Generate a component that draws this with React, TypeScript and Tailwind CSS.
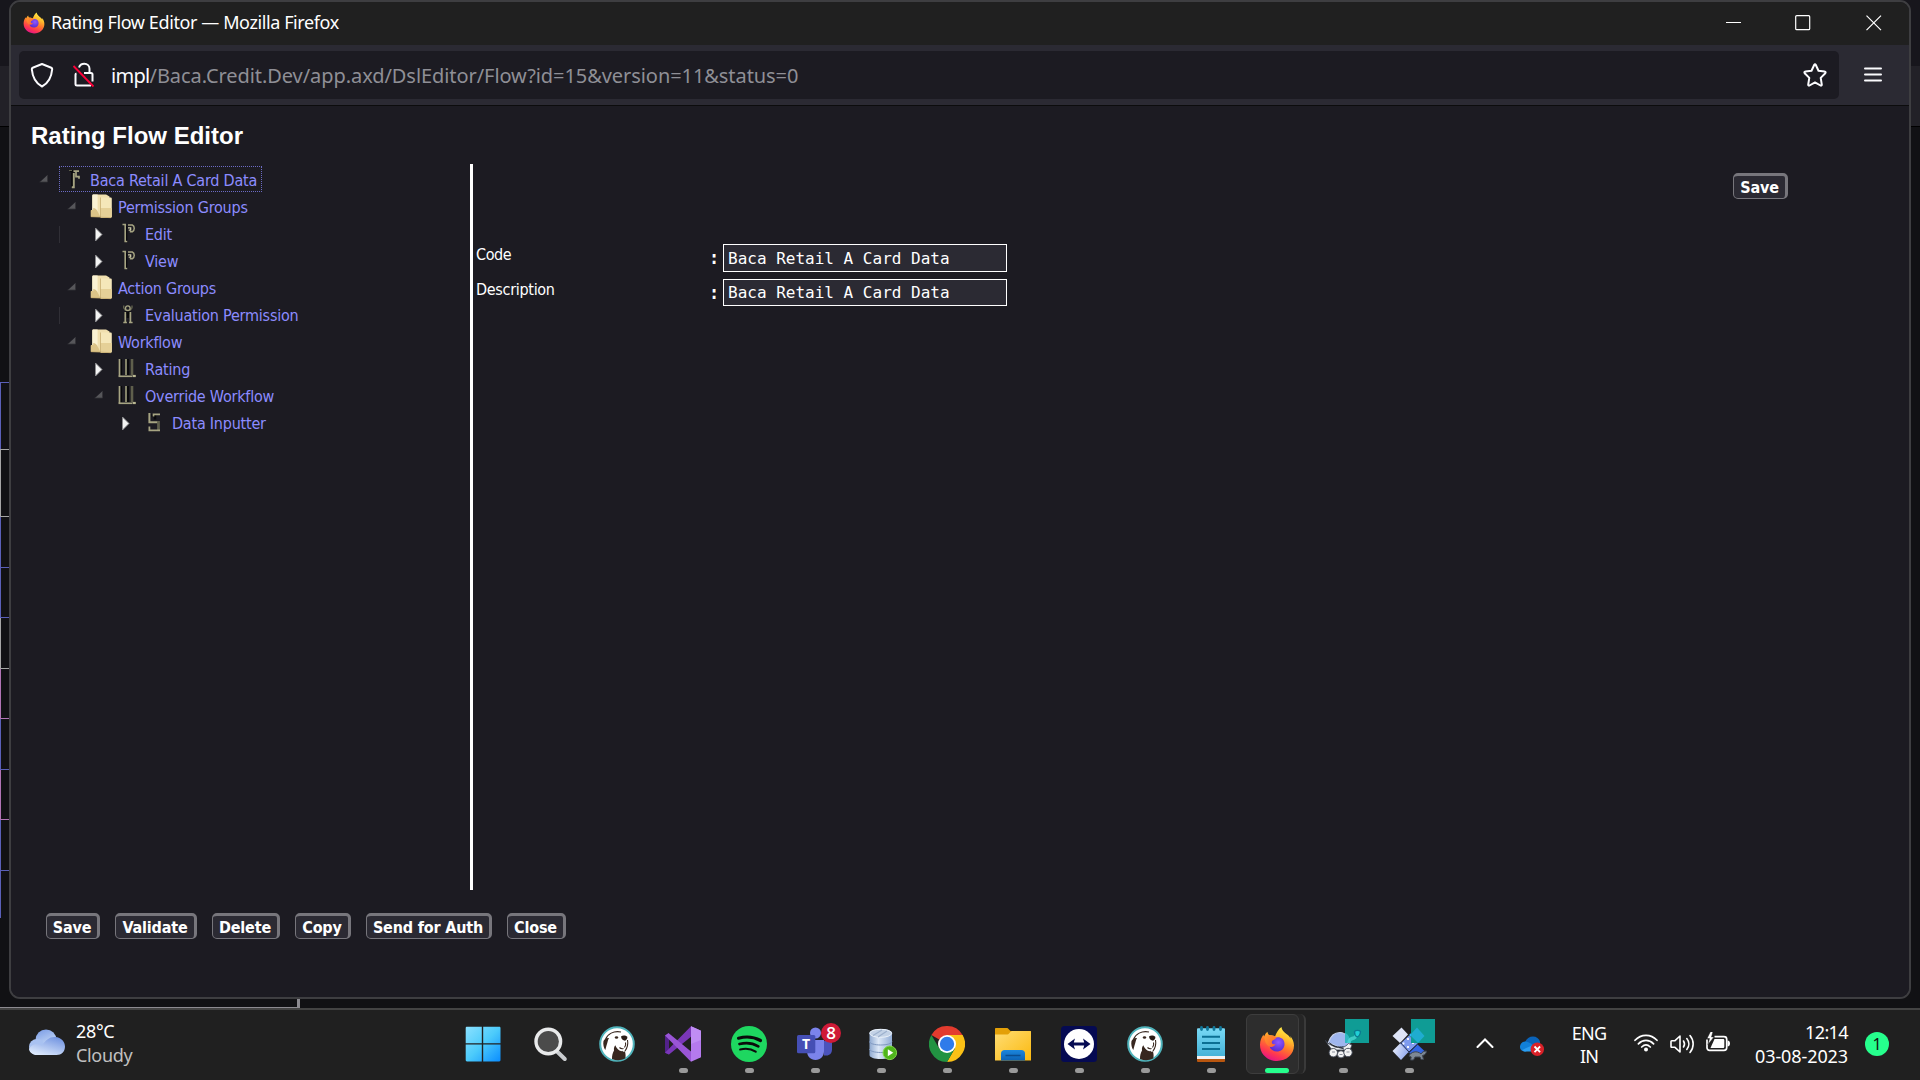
import React from "react";

type IconProps = { className?: string };

/* ---------- Firefox chrome icons ---------- */

function FirefoxLogo({ className }: IconProps) {
  const id = React.useId();
  return (
    <svg viewBox="0 0 36 36" className={className}>
      <defs>
        <linearGradient id={id + "a"} x1="0.8" y1="0" x2="0.35" y2="1">
          <stop offset="0" stopColor="#fff44f" />
          <stop offset="0.3" stopColor="#ffc12e" />
          <stop offset="0.55" stopColor="#ff7a2a" />
          <stop offset="0.8" stopColor="#ff3750" />
          <stop offset="1" stopColor="#e31587" />
        </linearGradient>
        <radialGradient id={id + "b"} cx="0.6" cy="0.35" r="0.7">
          <stop offset="0" stopColor="#9059ff" />
          <stop offset="0.6" stopColor="#6a3be0" />
          <stop offset="1" stopColor="#592acb" />
        </radialGradient>
        <linearGradient id={id + "c"} x1="0" y1="0" x2="1" y2="1">
          <stop offset="0" stopColor="#ff9a2a" />
          <stop offset="1" stopColor="#ff5a36" />
        </linearGradient>
      </defs>
      <path
        d="M22.500 1c.2 3 2.200 4.800 4.600 6.800 2 1.200 3.400 2.700 4.400 4.600.1-1 0-1.700-.2-2.400 2.300 2.700 3.700 6 3.700 9.600C35 28.600 27.400 35 18 35S1 28.200 1 19c0-4.200 1.500-7.800 3.500-10.400.1 1 .3 1.500.6 2 .7-2 1.900-3.600 3.400-4.800.1 1.400.6 2.500 1.500 3.200 2.300.2 4 .5 6 1.500 1.400-3.500 3.300-7.500 6.500-9.500z"
        fill={`url(#${id}a)`}
      />
      <path d="M14.500 12.500c4-2.500 11-1.400 11 5.500 0 5-3.800 7.500-7.700 7.500-4.300 0-7.300-3-7.300-6.800 0-2.500 1.500-4.800 4-6.200z" fill={`url(#${id}b)`} />
      <path
        d="M5.500 10.500c3.500-2 8.500-1.500 12 .8-.8 2.200-2.600 2.300-4 3.300-.6.500-.6 1.200-.7 2 .3 2.300 2.800 1.500 3.700 2-1.500 2-3.500 2.800-5.500 2.200-3.500-1-5.500-6-5.500-10.300z"
        fill={`url(#${id}c)`}
      />
    </svg>
  );
}

function ShieldIcon() {
  return (
    <svg viewBox="0 0 24 26" className="h-[26px] w-6" fill="none" stroke="#fbfbfe" strokeWidth="2" strokeLinejoin="round">
      <path d="M12 2 21.300 5.700c.8.3 1 .7.9 1.500C21.500 15 18 21.500 12 24.500 6 21.500 2.500 15 1.800 7.200c-.1-.8.1-1.200.9-1.500z" />
    </svg>
  );
}

function InsecureLockIcon() {
  return (
    <svg viewBox="0 0 24 26" className="h-[26px] w-6" fill="none">
      <path d="M7 5.500C7.800 3 10 1.800 12.300 1.800c3 0 5.200 2 5.200 5V11H19c1 0 1.500.6 1.500 1.500v7" stroke="#fbfbfe" strokeWidth="2" />
      <path d="M4.500 11.500c-.8.200-1 .6-1 1.300v9.200c0 .8.600 1.500 1.500 1.500h14" stroke="#fbfbfe" strokeWidth="2" />
      <path d="M12 11h6" stroke="#fbfbfe" strokeWidth="2" />
      <path d="m1.500 4 20 20.500" stroke="#ff0039" strokeWidth="1.800" />
    </svg>
  );
}

function StarIcon() {
  return (
    <svg viewBox="0 0 24 24" className="size-6" fill="none" stroke="#fbfbfe" strokeWidth="2" strokeLinejoin="round">
      <path d="M11.300 1.800c.3-.7 1.100-.7 1.400 0l2.800 5.900 6.200.9c.9.100 1.200 1 .6 1.600l-4.600 4.700 1.100 6.700c.1.800-.6 1.300-1.300.9L12 19.400l-5.500 3.100c-.7.400-1.400-.1-1.300-.9l1.100-6.700-4.600-4.700c-.6-.6-.3-1.500.6-1.600l6.200-.9z" />
    </svg>
  );
}

/* ---------- Tree icons, each drawn in a 27x27 slot ---------- */

function OpenMark() {
  return (
    <svg viewBox="0 0 27 27" className="size-[27px] shrink-0">
      <path d="M12.500 8v7H5z" fill="#56565a" />
      <path d="M4.500 15h8V8" fill="none" stroke="#333237" strokeWidth="0.800" />
    </svg>
  );
}

function ClosedMark() {
  return (
    <svg viewBox="0 0 27 27" className="size-[27px] shrink-0">
      <path d="M5.500 7v13l6.500-6.500z" fill="#f4f4f4" stroke="#8b8b8e" strokeWidth="0.900" />
    </svg>
  );
}

const OLIVE = "#a6a482";
const OLIVE_DARK = "#5f5f4c";

function TreeIcon({ kind }: { kind: string }) {
  return (
    <svg viewBox="0 0 27 27" className="size-[27px] shrink-0 overflow-visible">
      {kind === "folder" && (
        <g>
          <path d="M2.300 4.500V1.800c0-.8.500-1.300 1.300-1.300h12.500l3.400 2v20H2.300z" fill="#f0dfae" />
          <path d="M2.300 1.800c0-.8.500-1.300 1.300-1.300h4V18l-2 3.500H2.300z" fill="#faf2d3" />
          <path d="M10.500 3.500h10c.8 0 1.300.5 1.300 1.300v17.500c0 .8-.5 1.400-1.300 1.400h-9.200c-.5 0-.8-.3-.8-.8z" fill="#f5e7b9" />
          <path d="M10.500 14h11.300v8.500c0 .8-.5 1.200-1.300 1.200h-9.200c-.5 0-.8-.3-.8-.8z" fill="#e5d097" />
          <path d="M.7 17c0-.7.300-1 1-1h1.500V14c2 0 3.500 1 5 4.500L10.500 23H1.700c-.7 0-1-.3-1-1z" fill="#dcc488" />
          <path d="M10.500 3.500V23M.9 22.700l20 1" stroke="#c2a668" strokeWidth="0.700" fill="none" />
        </g>
      )}
      {kind === "flow" && (
        <g fill="none">
          <path d="M8 4h2.200v16" stroke="#08080a" strokeWidth="2" />
          <path d="M11.800 6v14.300h-2" stroke={OLIVE} strokeWidth="1.900" />
          <path d="M11.500 4.200h5.500M14 5v4.700h3v2" stroke={OLIVE} strokeWidth="1.700" />
          <path d="M7 3.500h3" stroke={OLIVE_DARK} strokeWidth="1" />
        </g>
      )}
      {kind === "permission" && (
        <g fill="none">
          <path d="M5.500 3.500h2.700v17h2" stroke={OLIVE} strokeWidth="1.600" />
          <path d="M9.700 5v14.500" stroke="#08080a" strokeWidth="1.200" />
          <path d="M11 4h4.300c2.600 1 2.600 5.500 0 6.700h-2.500" stroke={OLIVE} strokeWidth="1.500" />
          <path d="M11 6.800h2.700v2.300h-2" stroke="#cfcda8" strokeWidth="1.200" />
        </g>
      )}
      {kind === "action" && (
        <g fill="none">
          <path d="M6.700 3.500v2.200l2 3M15 3.500v2.200l-2 3" stroke={OLIVE_DARK} strokeWidth="1.400" />
          <circle cx="10.800" cy="6.200" r="2.300" stroke={OLIVE} strokeWidth="1.300" />
          <path d="M7.500 10.700h6.600M10.800 12v4" stroke="#08080a" strokeWidth="2.500" />
          <path d="M8.300 10v10.500M6.300 20.500h3.600M13.400 10v10.500M12 20.500h3.600" stroke={OLIVE} strokeWidth="1.700" />
        </g>
      )}
      {kind === "workflow" && (
        <g fill="none">
          <path d="M4.200 3v16M11 3v16" stroke="#08080a" strokeWidth="1.800" />
          <path d="M2.500 3v17" stroke={OLIVE} strokeWidth="1.700" />
          <path d="M9 3v16" stroke="#8a896e" strokeWidth="1.900" />
          <path d="M15 3v16" stroke={OLIVE_DARK} strokeWidth="2.600" />
          <path d="M1.500 20.300h13.500" stroke={OLIVE} strokeWidth="1.600" />
          <path d="M15.500 20h3.300" stroke="#b9b792" strokeWidth="2.200" />
        </g>
      )}
      {kind === "data" && (
        <g fill="none">
          <path d="M7.500 5.500h3.500v4" stroke="#08080a" strokeWidth="2.500" />
          <path d="M5.400 3v9.300h9" stroke={OLIVE} strokeWidth="2" />
          <path d="M9.500 6.500V4.300H16" stroke={OLIVE} strokeWidth="1.700" />
          <path d="M14.500 11v9" stroke={OLIVE_DARK} strokeWidth="2.800" />
          <path d="M4.500 20.300h11.500M5.400 16.500v4" stroke={OLIVE} strokeWidth="1.800" />
        </g>
      )}
    </svg>
  );
}

/* ---------- Taskbar icons ---------- */

function WindowsLogo() {
  return (
    <svg viewBox="0 0 36 36" className="size-9">
      <defs>
        <linearGradient id="win" x1="0" y1="0" x2="1" y2="1">
          <stop offset="0" stopColor="#8be1ff" />
          <stop offset="0.5" stopColor="#4ccbfb" />
          <stop offset="1" stopColor="#0a8dff" />
        </linearGradient>
      </defs>
      <path d="M2 .7h14.800v16.500H.7V2C.7 1.200 1.200.7 2 .7zM18.200.7h16c.8 0 1.300.5 1.300 1.300v15.200H18.200zM.7 18.600h16.100v16.800H2c-.8 0-1.300-.5-1.300-1.300zM18.200 18.600h17.300v15.500c0 .8-.5 1.300-1.300 1.300h-16z" fill="url(#win)" />
    </svg>
  );
}

function SearchLogo() {
  return (
    <svg viewBox="0 0 36 36" className="size-9">
      <path d="m22.500 24 9.300 9" stroke="#c9cccf" strokeWidth="4" strokeLinecap="round" />
      <circle cx="15.300" cy="15.500" r="12.300" fill="#4b4b4b" stroke="#e9eaeb" strokeWidth="3.400" />
    </svg>
  );
}

function BeaverLogo() {
  return (
    <svg viewBox="0 0 36 36" className="size-9">
      <circle cx="18" cy="18" r="16.800" fill="#fff" stroke="#4fb3bb" strokeWidth="2" />
      <path d="M13 33c0-3.500.5-6 2-8.500-.3-2.500.3-4 1.300-5.300 1 3 3.200 5.300 6.200 6l.8-.4c.5 1 1.500 1.300 2.600.4.800 2.500 1 5.500.3 7.300A15.500 15.500 0 0 1 13 33z" fill="#38271f" />
      <path d="M6.500 13.500C8.500 8 14.500 4.500 22 6" fill="none" stroke="#38271f" strokeWidth="1.100" />
      <path d="M4.500 15c1.200-2.500 3.200-3.300 5.500-3-1.500 2.200-1.200 4.500-2.500 7.500L6.300 24c-1.500-2-2.500-5.800-1.800-9z" fill="#38271f" />
      <path d="M22 10.500c1.500-1.500 4.500-1.500 6.300.2.400 1.600-.7 3.400-2.300 4-2-.2-3.800-1.700-4-4.200z" fill="#2a1c16" />
      <ellipse cx="17.500" cy="11.500" rx="1.700" ry="1.200" fill="#38271f" />
      <path d="M20.500 21.500c1 1 2.500 1.500 4 1M28.500 14c.8 4-.3 8-2.600 11.200M26.500 16.500c.5 1.500 0 3.500-1 5" fill="none" stroke="#38271f" strokeWidth="1.100" />
    </svg>
  );
}

function VisualStudioLogo() {
  return (
    <svg viewBox="0 0 36 36" className="size-9">
      <path d="M0 9.500 4 7.500v21L0 26.700z" fill="#52218a" />
      <path d="M0 26.700 26 .2v10.500L4 28.500z" fill="#7a37b8" />
      <path d="M0 9.500 3.500 7 26 25.500v10.300z" fill="#9a55d6" />
      <path d="M26 .2 35.500 4.500c.3.200.5.500.5.900v25.300c0 .4-.2.700-.5.900L26 35.800z" fill="#b57aee" />
      <path d="M26 .2 35.500 4.500c.3.200.5.500.5.900V14L26 18z" fill="#c08df4" />
    </svg>
  );
}

function SpotifyLogo() {
  return (
    <svg viewBox="0 0 36 36" className="size-9">
      <circle cx="18" cy="18" r="18" fill="#1ed760" />
      <g fill="none" stroke="#0b0b0b" strokeLinecap="round">
        <path d="M7.500 12.200c7.500-2 15.500-1.300 22 2.300" strokeWidth="3.200" />
        <path d="M8.500 18c6.500-1.700 13.500-.8 18.800 2.300" strokeWidth="2.700" />
        <path d="M9.200 23.500c5.500-1.400 11-.7 15.500 2.100" strokeWidth="2.200" />
      </g>
    </svg>
  );
}

function TeamsLogo() {
  return (
    <div className="relative size-9">
      <svg viewBox="0 0 36 36" className="size-9">
        <circle cx="18.500" cy="7" r="5.500" fill="#7b83eb" />
        <path d="M27 15h7.500c.3 0 .5.200.5.500v8c0 3.800-2.500 6-5.500 6H27z" fill="#4b53bc" />
        <path d="M10 14h17v11c0 5.500-3.500 9-8.500 9s-8.500-3.500-8.500-9z" fill="#7b83eb" />
        <rect x="0" y="9" width="18.300" height="18.300" rx="1.500" fill="#454fb5" />
      </svg>
      <span className="absolute top-[9px] left-0 w-[18px] text-center font-['Open_Sans',sans-serif] text-[14px] leading-[18px] font-bold text-white">T</span>
      <span className="absolute -top-[3px] left-6 size-5 rounded-full bg-[#cf1a37] text-center font-['Open_Sans',sans-serif] text-[17px] leading-5 font-semibold text-white">8</span>
    </div>
  );
}

function DatabaseLogo() {
  return (
    <svg viewBox="0 0 36 36" className="size-9">
      <defs>
        <linearGradient id="dbg" x1="0" y1="0" x2="1" y2="0">
          <stop offset="0" stopColor="#8fa9d0" />
          <stop offset="0.4" stopColor="#dde8f7" />
          <stop offset="1" stopColor="#92add6" />
        </linearGradient>
      </defs>
      <path d="M6.500 7c0-2.500 5-4 11.200-4S29 4.500 29 7v22c0 2.500-5 4-11.300 4S6.500 31.500 6.500 29z" fill="url(#dbg)" />
      <ellipse cx="17.700" cy="7.300" rx="11" ry="4" fill="#c3d2e6" stroke="#eef4fb" strokeWidth="0.900" />
      <path d="m10 9.500 9-5.500M15 11l9-6" stroke="#9db1cd" strokeWidth="1.200" />
      <path d="M6.500 15.500c0 2 5 3.500 11.200 3.500S29 17.500 29 15.500M6.500 23c0 2 5 3.500 11.200 3.500S29 25 29 23" fill="none" stroke="#7f98c0" strokeWidth="1" />
      <circle cx="26.800" cy="26.800" r="6.800" fill="#4fb51c" stroke="#83d84a" strokeWidth="1" />
      <path d="M24.800 23.300v7l5.500-3.500z" fill="#fff" />
    </svg>
  );
}

function ChromeLogo() {
  return (
    <svg viewBox="0 0 36 36" className="size-9">
      <path d="M18 18 2.410 9A18 18 0 0 1 33.590 9z" fill="#e33b2e" />
      <path d="M18 9H33.590A18 18 0 0 1 18 36l7.800-13.500z" fill="#fbc116" />
      <path d="M18 36A18 18 0 0 1 2.410 9L10.200 22.500 25.800 22.500z" fill="#229342" />
      <path d="M18 9h15.590L25.800 22.500 18 18z" fill="#fbc116" />
      <circle cx="18" cy="18" r="9" fill="#fff" />
      <circle cx="18" cy="18" r="7.200" fill="#2f7bea" />
    </svg>
  );
}

function ExplorerLogo() {
  return (
    <svg viewBox="0 0 36 36" className="size-9">
      <defs>
        <linearGradient id="exf" x1="0" y1="0" x2="1" y2="1">
          <stop offset="0" stopColor="#ffdd74" />
          <stop offset="1" stopColor="#fbb90f" />
        </linearGradient>
        <linearGradient id="exb" x1="0" y1="0" x2="0" y2="1">
          <stop offset="0" stopColor="#1b86dd" />
          <stop offset="1" stopColor="#0c62b4" />
        </linearGradient>
      </defs>
      <path d="M0 3c0-.6.400-1 1-1h10.500c1 0 1.500.4 2.500 1.500L15.500 5H35c.6 0 1 .4 1 1v10H0z" fill="#e3a008" />
      <path d="M0 8.500h11.500c1.500 0 2-.3 3-1.500s1.500-2 3-2H35c.6 0 1 .4 1 1v28.500H0z" fill="url(#exf)" />
      <path d="M6 27.500C6 25.500 7.500 24 9.500 24h17c2 0 3.500 1.500 3.500 3.500v7H6z" fill="url(#exb)" />
      <path d="M10.500 29.500h15" stroke="#0a4c8f" strokeWidth="1.500" />
    </svg>
  );
}

function TeamViewerLogo() {
  return (
    <svg viewBox="0 0 36 36" className="size-9">
      <rect width="36" height="36" rx="3.500" fill="#050a52" />
      <circle cx="18" cy="18" r="15" fill="#fff" />
      <path d="M6.500 18 14 12.500l-1.200 4h10.400l-1.200-4 7.500 5.500-7.500 5.500 1.200-4H12.800l1.200 4z" fill="#050a52" />
    </svg>
  );
}

function NotepadLogo() {
  return (
    <svg viewBox="0 0 36 36" className="size-9">
      <defs>
        <linearGradient id="ntp" x1="0" y1="0" x2="0" y2="1">
          <stop offset="0" stopColor="#78d9f5" />
          <stop offset="1" stopColor="#46b3d8" />
        </linearGradient>
      </defs>
      <rect x="4" y="31" width="28" height="5" rx="1" fill="#b8560f" />
      <rect x="4" y="29" width="28" height="4" fill="#f2f2f2" />
      <path d="M4 3.500c0-.8.500-1.300 1.300-1.300h25.400c.8 0 1.300.5 1.300 1.300V30H4z" fill="url(#ntp)" />
      <path d="M9 10.800h18M9 17h18M9 23h18" stroke="#0b6f93" strokeWidth="2" />
      <path d="M8.500 1.500v2M14.500 1.500v2M21 1.500v2M27.500 1.500v2" stroke="#117799" strokeWidth="2.800" strokeLinecap="round" />
    </svg>
  );
}

function TurtleLogo() {
  return (
    <div className="relative size-9">
      <svg viewBox="0 0 36 36" className="size-9">
        <path d="M3.500 16.500C5.500 10 9.500 6.500 15 6.500S24 10 25 20l-8 2.500z" fill="#9fb6ee" stroke="#c9d3ea" strokeWidth="1.200" />
        <path d="M.5 14.500c2 3.500 6 4.500 9.500 6.500 6 1.500 10 .5 13.500-3.500l3.500 1.500-2 5H7l-4-5.500z" fill="#eef0f3" stroke="#3e4552" strokeWidth="0.800" />
        <path d="M4.500 16.500c3.500 4 8.500 5 14 4.300M14 21.500l5 1.500" fill="none" stroke="#1d2230" strokeWidth="0.900" />
        <circle cx="8.300" cy="26.700" r="4.200" fill="#f3f3f3" stroke="#3e4552" strokeWidth="0.900" />
        <circle cx="16" cy="28.300" r="3.600" fill="#f3f3f3" stroke="#3e4552" strokeWidth="0.900" />
        <circle cx="23" cy="26.500" r="4.200" fill="#f3f3f3" stroke="#3e4552" strokeWidth="0.900" />
        <path d="M7 26h3M14.500 28.500h3M21.500 26h3" stroke="#8d929c" strokeWidth="1.200" />
      </svg>
      <span className="absolute -top-[7px] left-5 size-6 bg-[#0f9c95]" />
      <svg viewBox="0 0 24 24" className="absolute -top-[7px] left-5 size-6">
        <path d="M0 14c3 1 5 4 5.500 10H0z" fill="#3fc4d6" opacity="0.700" />
        <path d="M4 24c0-3 2-4.500 5-5 2-.8 2.500-3 3.500-5" fill="none" stroke="#52e0dc" strokeWidth="3.500" opacity="0.700" />
        <path d="M9.500 12.500c1.500-1.500 4.500-1.500 6 0-.3 2.500-1.500 5-3.500 5.500-1.700-1-2.500-3-2.500-5.500z" fill="#1fd0d6" stroke="#0b7b90" strokeWidth="1.300" />
      </svg>
    </div>
  );
}

function MergeLogo() {
  return (
    <div className="relative size-9">
      <svg viewBox="0 0 36 36" className="size-9">
        <defs>
          <linearGradient id="mrg" x1="0" y1="0.300" x2="1" y2="0.700">
            <stop offset="0" stopColor="#e6ebfa" />
            <stop offset="1" stopColor="#8ea6ee" />
          </linearGradient>
        </defs>
        <path d="M10.500 1.500 17 8.500l-8 8.500-7.500-7z" fill="#dfe5f8" />
        <path d="m26 1.500 7.500 8.500-7.500 8-8-9z" fill="#2db6f5" />
        <path d="m18 9.500 8.500 8.500-9 8.500L9 18z" fill="#7f9bee" />
        <path d="m9 17.500 8.500 8.500-7.500 8-8.500-9z" fill="url(#mrg)" />
        <path d="m26.500 18.500 7 6.500-6 5.500-9.500-3.500z" fill="#3467e4" />
        <path d="m9.500 16.500 8.500 9.500 8.500-8" stroke="#16203f" strokeWidth="0.900" fill="none" />
        <path d="M17 12v2M17 20v2M22 16v2M12.500 16.500v2" stroke="#fff" strokeWidth="1.800" />
        <path d="M18 30c1.500-4 8-6 12-2 1-2 3-3 5.500-3-.2 2.500-1.500 4-4 4.500l1 4h-2.500l-1-2.500h-5l-1.500 3h-3l.7-3z" fill="#7d8894" stroke="#3c4450" strokeWidth="1" />
      </svg>
      <span className="absolute -top-[7px] left-5 size-6 bg-[#0f9c95]" />
      <svg viewBox="0 0 24 24" className="absolute -top-[7px] left-5 size-6">
        <path d="M0 15 6 8.500l7.500 8.500L7 24l-7-7z" fill="#27b4ea" opacity="0.700" />
      </svg>
    </div>
  );
}

function CloudIcon() {
  return (
    <svg viewBox="0 0 36 26" className="h-[26px] w-9">
      <defs>
        <linearGradient id="cld" x1="0.200" y1="0" x2="0.600" y2="1">
          <stop offset="0" stopColor="#7e9fe6" />
          <stop offset="0.600" stopColor="#b3caf2" />
          <stop offset="1" stopColor="#dbe8fb" />
        </linearGradient>
        <linearGradient id="cld2" x1="0.900" y1="0" x2="0.300" y2="1">
          <stop offset="0" stopColor="#6c8fdf" />
          <stop offset="1" stopColor="#dce9fc" />
        </linearGradient>
      </defs>
      <circle cx="17" cy="11" r="10.500" fill="url(#cld)" />
      <circle cx="8" cy="18" r="8" fill="#a9c2f1" />
      <path d="M8 26c-4 0-7.500-2.500-8-6 3-6 10-6 13-3 3-6 8-9.500 13.500-9 5.500.500 9.500 4.500 9.500 9.500S32.500 26 27.500 26z" fill="url(#cld2)" />
    </svg>
  );
}

function OneDriveIcon() {
  return (
    <svg viewBox="0 0 24 20" className="h-5 w-6">
      <path d="M5 6C6.500 2.500 9.500.5 13 .5c3.500 0 6 2 7 5v6H5z" fill="#0a63b8" />
      <path d="M0 11c0-3 2-5.300 5-5.500 2.500 0 5 1.500 8 3.500L6 15.500C2.500 15.500 0 14 0 11z" fill="#1180d8" />
      <path d="M2 14 12 9.500l7 6H5.500C4 15.500 3 15 2 14z" fill="#2b9df0" />
      <circle cx="17.300" cy="13.300" r="6.700" fill="#da2128" />
      <path d="m14.500 10.500 5.600 5.600m0-5.600-5.600 5.600" stroke="#fff" strokeWidth="1.800" />
    </svg>
  );
}

function WifiIcon() {
  return (
    <svg viewBox="0 0 24 18" className="h-[18px] w-6" fill="none" stroke="#fff" strokeWidth="1.700" strokeLinecap="round">
      <path d="M1 6.300C7-.3 17-.3 23 6.300M4.400 9.800c4.400-4.500 10.800-4.500 15.200 0M7.700 13c2.700-2.600 5.900-2.600 8.600 0" />
      <circle cx="12" cy="15.500" r="2" fill="#fff" stroke="none" />
    </svg>
  );
}

function SoundIcon() {
  return (
    <svg viewBox="0 0 24 20" className="h-5 w-6" fill="none" stroke="#fff" strokeWidth="1.600" strokeLinecap="round" strokeLinejoin="round">
      <path d="M1 7.500c0-.5.300-.8.800-.8H5L10 2v16l-5-4.700H1.800c-.5 0-.8-.3-.8-.8zM13.500 7c1.200 1.800 1.200 4.200 0 6M16.800 4.500c2.700 3.300 2.700 7.700 0 11M20 1.500c4.200 5 4.200 12 0 17" />
    </svg>
  );
}

function BatteryIcon() {
  return (
    <svg viewBox="0 0 24 20" className="h-5 w-6" fill="none">
      <path d="M8.500 4.700H18c1.600 0 2.700 1 2.700 2.500v8.600c0 1.500-1.100 2.500-2.700 2.500H3.500C2 18.300 1 17.300 1 15.800V7.500" stroke="#fff" strokeWidth="1.700" />
      <path d="M8.500 7H17c.8 0 1.300.5 1.300 1.300v6.400c0 .8-.5 1.300-1.300 1.300H4.500z" fill="#fff" />
      <path d="M21.500 8.500c1.500 0 2.500 1.200 2.500 3s-1 3-2.500 3z" fill="#fff" />
      <path d="M4.500-.5 1 6.500h2.500L2 12.500l6-7.500H5.500L7-.5z" fill="#fff" stroke="#202020" strokeWidth="0.500" />
    </svg>
  );
}

/* ---------- Page parts ---------- */

function TitleBar() {
  return (
    <div className="flex h-[43px] items-center bg-[#202020] pl-3">
      <FirefoxLogo className="-mt-[2px] size-[22px]" />
      <span className="-mt-[2px] ml-[6px] text-[18px] tracking-[-0.400px] whitespace-nowrap text-white">Rating Flow Editor — Mozilla Firefox</span>
      <svg viewBox="0 0 156 16" className="-mt-[2px] mr-[27px] ml-auto h-4 w-[156px]" fill="none" stroke="#fff" strokeWidth="1.200">
        <path d="M0 7.500h15M140.500.7 155 15.200M155 .7 140.500 15.200" />
        <rect x="69.700" y="0.700" width="14" height="14" rx="1" />
      </svg>
    </div>
  );
}

function NavBar() {
  return (
    <div className="flex h-[61px] items-center border-b border-[#0c0c0d] bg-[#2b2a33] pl-2">
      <div className="flex h-12 w-[1820px] items-center rounded-[5px] bg-[#1c1b22] pr-3 pl-[11px]">
        <ShieldIcon />
        <span className="w-[18px]" />
        <InsecureLockIcon />
        <span className="mt-[2px] ml-[15px] text-[20px] whitespace-nowrap text-[#fbfbfe]">
          <span className="tracking-[-0.700px]">impl</span>
          <span className="tracking-[-0.070px] text-[#8f8f96]">/Baca.Credit.Dev/app.axd/DslEditor/Flow?id=15&amp;version=11&amp;status=0</span>
        </span>
        <span className="ml-auto">
          <StarIcon />
        </span>
      </div>
      <svg viewBox="0 0 18 15" className="-mt-px ml-[25px] h-[15px] w-[18px]" stroke="#fbfbfe" strokeWidth="2" strokeLinecap="round">
        <path d="M1 1.500h16M1 7.500h16M1 13.500h16" />
      </svg>
    </div>
  );
}

function Row({ level, open, icon, label, selected, line }: { level: 1 | 2 | 3 | 4; open?: boolean; icon: string; label: string; selected?: boolean; line?: boolean }) {
  const pad = { 1: "pl-6", 2: "pl-[52px]", 3: "pl-[79px]", 4: "pl-[106px]" }[level];
  return (
    <div className={`relative flex h-[27px] items-center ${pad}`}>
      {line && <span className="absolute top-[5px] left-12 h-[17px] w-px bg-[#302f36]" />}
      {open ? <OpenMark /> : <ClosedMark />}
      <TreeIcon kind={icon} />
      <span className="ml-px text-[16px] leading-[27px] tracking-[-0.220px] whitespace-nowrap text-[#8c8cff]">{label}</span>
      {selected && <span className="absolute -top-px left-12 h-[26px] w-[203px] border border-dotted border-[#6b6bc4]" />}
    </div>
  );
}

function Btn({ label, className }: { label: string; className: string }) {
  return (
    <button
      className={`flex h-[26px] items-center justify-center rounded-[5px] border-t-[3px] border-r-[3px] border-b border-l border-[#77767c] bg-[#2b2a33] pt-px font-['DejaVu_Sans_Condensed','DejaVu_Sans',sans-serif] text-[16px] leading-5 font-bold tracking-[-0.180px] whitespace-nowrap text-white ${className}`}
    >
      {label}
    </button>
  );
}

function Field({ label, value, className, inputClass, labelClass }: { label: string; value: string; className: string; inputClass: string; labelClass: string }) {
  return (
    <div className={`flex ${className}`}>
      <span className={`w-[236px] pt-px pl-px text-[16px] leading-5 ${labelClass}`}>{label}</span>
      <span className="mt-[4px] w-[12px] text-[17px] leading-5 font-bold">:</span>
      <span className={`flex w-[284px] items-center border border-white bg-[#2b2a33] pl-1 font-['DejaVu_Sans_Mono',monospace] text-[16px] leading-5 whitespace-pre ${inputClass}`}>{value}</span>
    </div>
  );
}

function Page() {
  return (
    <div className="flex flex-1 flex-col bg-[#1c1b22] font-['DejaVu_Sans_Condensed','DejaVu_Sans',sans-serif] text-white">
      <h1 className="mt-[15px] ml-5 font-['Liberation_Sans',sans-serif] text-[24px] leading-[30px] font-bold">Rating Flow Editor</h1>
      <div className="mt-[13px] flex h-[726px]">
        <div className="w-[459px] pt-[3px]">
          <Row level={1} open icon="flow" label="Baca Retail A Card Data" selected />
          <Row level={2} open icon="folder" label="Permission Groups" />
          <Row level={3} icon="permission" label="Edit" line />
          <Row level={3} icon="permission" label="View" />
          <Row level={2} open icon="folder" label="Action Groups" />
          <Row level={3} icon="action" label="Evaluation Permission" line />
          <Row level={2} open icon="folder" label="Workflow" />
          <Row level={3} icon="workflow" label="Rating" />
          <Row level={3} open icon="workflow" label="Override Workflow" />
          <Row level={4} icon="data" label="Data Inputter" />
        </div>
        <div className="w-[3px] bg-white" />
        <div className="flex-1">
          <div className="flex justify-end pt-[9px] pr-[121px]">
            <Btn label="Save" className="w-[55px] pt-[3px]" />
          </div>
          <Field label="Code" value="Baca Retail A Card Data" className="mt-[45px] ml-[2px] h-[35px]" inputClass="h-7 pt-px" labelClass="tracking-[-0.400px]" />
          <Field label="Description" value="Baca Retail A Card Data" className="ml-[2px] h-[35px]" inputClass="h-[27px]" labelClass="tracking-[-0.300px]" />
        </div>
      </div>
      <div className="mt-[23px] ml-[35px] flex gap-[15px]">
        <Btn label="Save" className="w-[54px]" />
        <Btn label="Validate" className="w-[82px]" />
        <Btn label="Delete" className="w-[68px]" />
        <Btn label="Copy" className="w-[56px]" />
        <Btn label="Send for Auth" className="w-[126px]" />
        <Btn label="Close" className="w-[59px]" />
      </div>
    </div>
  );
}

function Task({ children, running, active }: { children: React.ReactNode; running?: boolean; active?: boolean }) {
  return (
    <div className="relative flex w-[66px] flex-col items-center pt-4">
      {active && (
        <>
          <span className="absolute top-1 left-[8px] h-[60px] w-[54px] rounded-[6px] border-r-2 border-[#3a3a3a] bg-[#262626]" />
          <span className="absolute top-1 left-[2px] h-[60px] w-[53px] rounded-[6px] border border-[#3d3d3d] bg-[#2d2d2d]" />
        </>
      )}
      <div className="relative">{children}</div>
      {running && <span className={`relative mt-[6px] h-[5px] rounded-full ${active ? "w-6 bg-[#26ff8d]" : "w-[9px] bg-[#9a9a9a]"}`} />}
    </div>
  );
}

function Taskbar() {
  return (
    <div className="absolute inset-x-0 bottom-0 flex h-[72px] border-t-2 border-[#434343] bg-[#202020] text-[18px] text-white">
      <div className="flex w-[450px] pl-[29px]">
        <span className="mt-[19px]">
          <CloudIcon />
        </span>
        <div className="mt-[9px] ml-[11px] leading-6 tracking-[-0.330px]">
          <div>28°C</div>
          <div className="text-[#c0c0c0]">Cloudy</div>
        </div>
      </div>
      <Task><WindowsLogo /></Task>
      <div className="ml-[2px] flex">
        <Task><SearchLogo /></Task>
        <Task><BeaverLogo /></Task>
        <Task running><VisualStudioLogo /></Task>
        <Task running><SpotifyLogo /></Task>
        <Task running><TeamsLogo /></Task>
        <Task running><DatabaseLogo /></Task>
        <Task running><ChromeLogo /></Task>
        <Task running><ExplorerLogo /></Task>
        <Task running><TeamViewerLogo /></Task>
        <Task running><BeaverLogo /></Task>
        <Task running><NotepadLogo /></Task>
        <Task running active><FirefoxLogo className="size-9" /></Task>
        <Task running><TurtleLogo /></Task>
        <Task running><MergeLogo /></Task>
      </div>
      <div className="flex h-[68px] flex-1 items-center">
        <svg viewBox="0 0 18 10" className="-mt-[2px] ml-[34px] h-[10px] w-[18px]" fill="none" stroke="#fff" strokeWidth="2" strokeLinecap="round">
          <path d="m1.500 9 7.500-7.500L16.500 9" />
        </svg>
        <span className="mt-1 ml-[26px]"><OneDriveIcon /></span>
        <div className="mt-[2px] ml-[22px] w-[46px] text-center leading-[23px] tracking-[-0.800px]">
          <div>ENG</div>
          <div>IN</div>
        </div>
        <span className="-mt-[2px] ml-[22px]"><WifiIcon /></span>
        <span className="ml-3"><SoundIcon /></span>
        <span className="-mt-1 ml-3"><BatteryIcon /></span>
        <div className="w-[118px] text-right leading-6 tracking-[-0.100px]">
          <div className="tracking-[-0.600px]">12:14</div>
          <div>03-08-2023</div>
        </div>
        <span className="ml-[17px] size-6 rounded-full bg-[#26ff8d] text-center text-[16px] leading-6 text-[#111]">1</span>
      </div>
    </div>
  );
}

function BackgroundGrid() {
  return (
    <div className="absolute top-[382px] left-0 flex w-[9px] flex-col">
      <span className="h-[67px] border-t border-l border-[#5a5fb8]" />
      <span className="h-[68px] border-y border-l border-[#a5a5a5]" />
      <span className="h-[51px] border-b border-l border-[#5a5fb8]" />
      <span className="h-[50px] border-b border-l border-[#5a5fb8]" />
      <span className="h-[51px] border-b border-l border-[#a5a5a5]" />
      <span className="h-[50px] border-b border-l border-[#b074b4]" />
      <span className="h-[51px] border-b border-l border-[#5a5fb8]" />
      <span className="h-[50px] border-b border-l border-[#b074b4]" />
      <span className="h-[51px] border-b border-l border-[#5a5fb8]" />
      <span className="h-[47px] border-l border-[#5a5fb8]" />
    </div>
  );
}

export default function App() {
  return (
    <div className="relative h-[1080px] w-[1920px] overflow-hidden bg-[#111114] font-['Noto_Sans',sans-serif]">
      <div className="h-[66px] bg-[#17161c]" />
      <div className="h-[61px] border-b border-black bg-[#222127]" />
      <BackgroundGrid />
      <span className="absolute top-[990px] left-0 h-[18px] w-[300px] border-r-[3px] border-b border-[#8c8a90]" />
      <div className="absolute top-0 left-[9px] flex h-[999px] w-[1902px] flex-col overflow-hidden rounded-[11px] border-2 border-[#3e3e41] bg-[#1c1b22]">
        <TitleBar />
        <NavBar />
        <Page />
      </div>
      <Taskbar />
    </div>
  );
}
